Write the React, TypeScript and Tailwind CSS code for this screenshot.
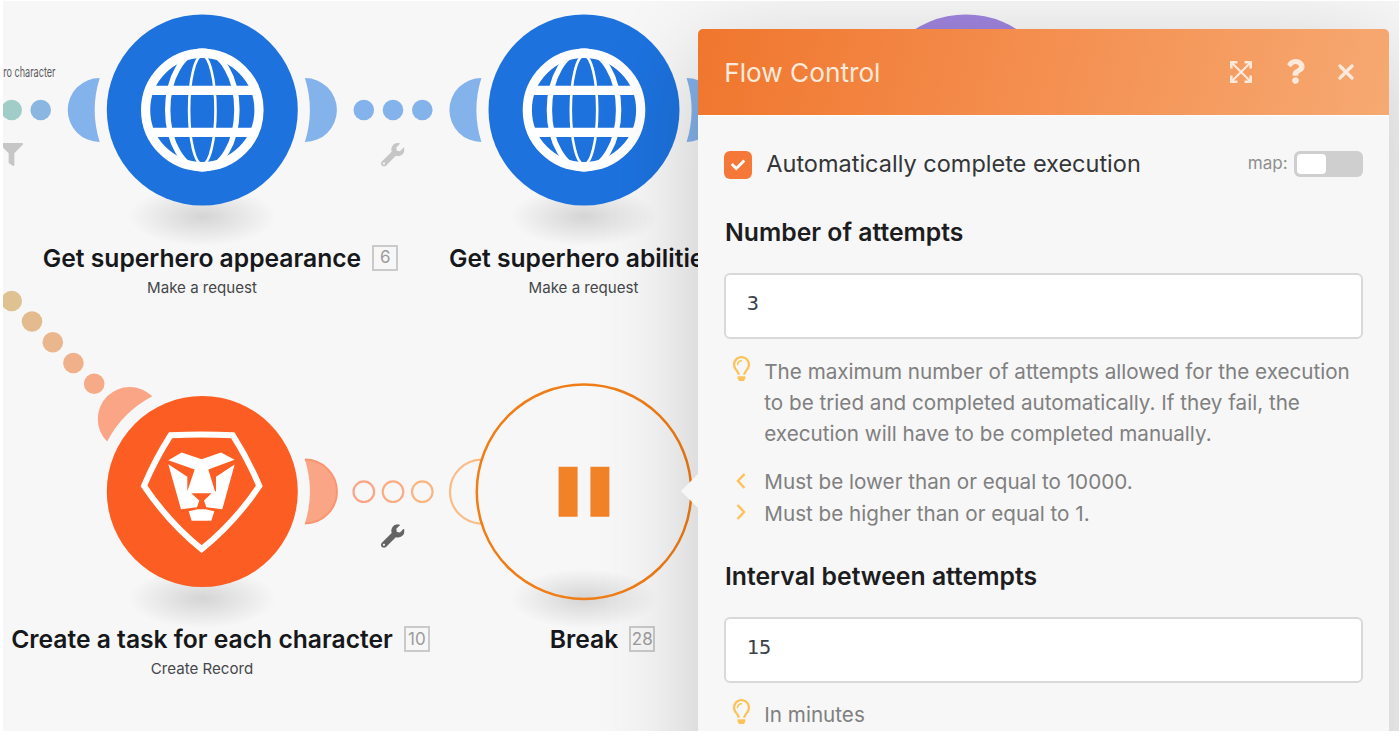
import type { ReactNode } from "react";
import { FaCheck, FaFilter, FaQuestion, FaRegLightbulb, FaWrench } from "react-icons/fa";

const LEFT_TAB = "M-102.6 -32 A32 32 0 0 0 -102.6 32 A107 107 0 0 1 -102.6 -32 Z";
const RIGHT_TAB = "M102.6 -32 A32 32 0 0 1 102.6 32 A107 107 0 0 0 102.6 -32 Z";

const blueDots = [363.8, 393, 422.3];
const routeDots: [number, number, string][] = [
  [11.7, 301, "#dec292"],
  [32, 321.5, "#e4bb8f"],
  [52.8, 342.3, "#e9b68d"],
  [73.4, 363, "#efb08a"],
  [94.2, 383.7, "#f5ab87"],
];
const ringDots: [number, string][] = [
  [363.8, "#fba588"],
  [393, "#f9ad85"],
  [422.3, "#f8b681"],
];

function GroundShadow({ x, y }: { x: number; y: number }) {
  return <ellipse cx={x} cy={y} rx="74" ry="30" fill="url(#ground)" />;
}

function GlobeNode({ x, y }: { x: number; y: number }) {
  return (
    <g transform={`translate(${x} ${y})`}>
      <path d={LEFT_TAB} fill="#84b2ea" />
      <path d={RIGHT_TAB} fill="#84b2ea" />
      <circle r="95.5" fill="#1d72de" />
      <g fill="none" stroke="#fff">
        <circle r="56.7" strokeWidth="9.2" />
        <ellipse rx="13.2" ry="54.5" strokeWidth="2.6" />
        <ellipse rx="34.6" ry="59" strokeWidth="5.4" />
        <path d="M-50 -19.6 H50 M-50 22.4 H50" strokeWidth="9.2" />
      </g>
    </g>
  );
}

function LionNode({ x, y }: { x: number; y: number }) {
  return (
    <g transform={`translate(${x} ${y})`}>
      <path d={LEFT_TAB} fill="#fba587" transform="rotate(45)" />
      <path d={RIGHT_TAB} fill="#fba587" />
      <path d="M102.6 -32 A32 32 0 0 1 102.6 32" fill="none" stroke="#fb9471" strokeWidth="2" />
      <circle r="95.5" fill="#fc5d22" />
      <g transform="translate(-102.3 -101.3) scale(.3333)">
        <path
          d="M212 135 Q305 131 398 135 Q443 205 478 287 Q405 396 305 477 Q205 396 132 287 Q167 205 212 135 Z"
          fill="none"
          stroke="#fff"
          strokeWidth="18"
        />
        <path
          fill="#fff"
          d="M205 210 L245 187 L305 207 L363 187 L404 209 L325 238 L345 303 L348 303 L348 260 L404 223 L367 357 L319 351 L312 331 L335 309 L274 309 L298 331 L291 351 L243 357 L205 222 L262 260 L262 303 L284 238 Z"
        />
        <path fill="#fff" d="M266 363 L293 357 H317 L343 363 L334 392 H275 Z" />
      </g>
    </g>
  );
}

function BreakNode({ x, y }: { x: number; y: number }) {
  return (
    <g transform={`translate(${x} ${y})`}>
      <path d="M-102 -32 A32 32 0 0 0 -102 32" fill="none" stroke="#f8bd88" strokeWidth="2.2" />
      <circle r="107.2" fill="none" stroke="#f07d15" strokeWidth="2.5" />
      <path d="M-25.4 -24.9 h19 v50 h-19 Z M6.4 -24.9 h19 v50 h-19 Z" fill="#f18228" />
    </g>
  );
}

function NodeLabel({ title, badge, subtitle, className }: { title: string; badge?: string; subtitle?: string; className: string }) {
  return (
    <div className={"absolute flex w-[400px] flex-col items-center " + className}>
      <div className="relative text-[24.65px] leading-8 font-semibold whitespace-nowrap text-[#16181b]">
        {title}
        {badge && (
          <span className="absolute top-[3px] left-full ml-[11px] flex h-[26px] w-[26px] items-center justify-center border-2 border-[#cacaca] text-[17px] leading-none font-normal text-[#9c9c9c]">
            {badge}
          </span>
        )}
      </div>
      {subtitle && <div className="mt-[4px] text-[15.1px] leading-5 whitespace-nowrap text-[#45474a]">{subtitle}</div>}
    </div>
  );
}

function Hint({ icon, children }: { icon: ReactNode; children: ReactNode }) {
  return (
    <div className="flex">
      <span className="flex h-[31px] w-[40px] shrink-0 justify-center pr-[6px]">{icon}</span>
      <p className="text-[20.65px] leading-[31.2px] whitespace-nowrap text-[#808080]">{children}</p>
    </div>
  );
}

function Angle({ d }: { d: string }) {
  return (
    <svg width="12" height="18" viewBox="0 0 12 18" className="mt-[5.5px]">
      <path d={d} fill="none" stroke="#fdc35b" strokeWidth="2.5" />
    </svg>
  );
}

function Field({ value }: { value: string }) {
  return (
    <div className="mt-[25.4px] h-[65.6px] rounded-[6px] border-2 border-[#d9d9d9] bg-white px-[20.5px] pt-[12px] font-['DejaVu_Sans_Mono',monospace] text-[20.3px] leading-8 text-[#3a414b]">
      {value}
    </div>
  );
}

const headingClass = "pl-[0.7px] text-[24.75px] leading-8 font-semibold text-[#1d1d1f]";

function FlowControlPanel() {
  return (
    <section className="absolute top-[27.5px] left-[695.3px] h-[800px] w-[690.4px] rounded-[5px] bg-[#f7f7f7] shadow-[0_26px_100px_rgba(0,0,0,0.2)]">
      <svg className="absolute top-[444px] left-[-17px]" width="18" height="36" viewBox="0 0 18 36">
        <path d="M0 18 L18 0 V36 Z" fill="#f7f7f7" />
      </svg>
      <header className="flex h-[86px] items-center rounded-t-[5px] bg-[linear-gradient(105deg,#f0762d_0%,#f48f50_50%,#f6a972_100%)] pr-[34.5px] pl-[26px] text-[#feeadc]">
        <h1 className="grow pt-[3px] text-[26.2px] leading-8">Flow Control</h1>
        <svg width="22" height="22" viewBox="0 0 22 22" fill="none" stroke="currentColor" strokeWidth="2.6">
          <path d="M1.3 7.4 V1.3 H7.4 M14.6 1.3 H20.7 V7.4 M20.7 14.6 V20.7 H14.6 M7.4 20.7 H1.3 V14.6" />
          <path d="M2 2 L20 20 M20 2 L2 20" strokeWidth="2.2" />
        </svg>
        <FaQuestion className="ml-[31.5px] h-[25px] w-[25px]" />
        <svg className="ml-[30px]" width="16" height="16" viewBox="0 0 16 16" fill="none" stroke="currentColor" strokeWidth="3.2" strokeLinecap="round">
          <path d="M2 2 L14 14 M14 2 L2 14" />
        </svg>
      </header>
      <div className="border-t border-white px-[26px] pt-[35.5px]">
        <div className="flex h-7 items-center">
          <span className="flex h-7 w-7 items-center justify-center rounded-[6px] bg-[#f67838] text-white">
            <FaCheck className="h-[14px] w-[14px]" />
          </span>
          <span className="ml-[14px] grow pb-[3px] text-[23.5px] leading-none text-[#343638]">Automatically complete execution</span>
          <span className="mr-[6px] pb-[4px] text-[17.1px] leading-none text-[#8f8f8f]">map:</span>
          <span className="mb-[3px] flex h-[26px] w-[69px] rounded-[6px] bg-[#cfcfcf] p-[3px]">
            <span className="h-[20px] w-[29px] rounded-[4px] bg-white" />
          </span>
        </div>

        <h2 className={headingClass + " mt-[37px]"}>Number of attempts</h2>
        <Field value="3" />
        <div className="mt-[17px]">
          <Hint icon={<FaRegLightbulb className="h-[25px] w-[25px] text-[#fdc35b]" />}>
            The maximum number of attempts allowed for the execution
            <br />
            to be tried and completed automatically. If they fail, the
            <br />
            execution will have to be completed manually.
          </Hint>
        </div>
        <div className="mt-[16.8px]">
          <Hint icon={<Angle d="M9.5 2 L3 9 L9.5 16" />}>Must be lower than or equal to 10000.</Hint>
          <Hint icon={<Angle d="M2.5 2 L9 9 L2.5 16" />}>Must be higher than or equal to 1.</Hint>
        </div>

        <h2 className={headingClass + " mt-[30.8px]"}>Interval between attempts</h2>
        <Field value="15" />
        <div className="mt-[16.8px]">
          <Hint icon={<FaRegLightbulb className="h-[25px] w-[25px] text-[#fdc35b]" />}>In minutes</Hint>
        </div>
      </div>
    </section>
  );
}

export default function App() {
  return (
    <div className="h-[736px] w-[1400px] overflow-hidden bg-white pt-px pl-[3px] font-['Inter',sans-serif]">
      <main className="relative h-[730px] w-[1396px] overflow-hidden bg-[#f7f7f7]">
        <svg className="block" width="1396" height="730" viewBox="3 1 1396 730">
          <defs>
            <radialGradient id="ground">
              <stop offset="0" stopColor="#000" stopOpacity=".14" />
              <stop offset="1" stopColor="#000" stopOpacity="0" />
            </radialGradient>
          </defs>
          <GroundShadow x={202.3} y={216.5} />
          <GroundShadow x={584} y={216.5} />
          <GroundShadow x={202.3} y={598.5} />
          <GroundShadow x={584} y={598.5} />
          <circle cx="11.7" cy="110" r="10.3" fill="#a1cdc8" />
          <circle cx="40.7" cy="110" r="10.3" fill="#8ab6e2" />
          {blueDots.map((x) => (
            <circle key={x} cx={x} cy="110" r="10.3" fill="#84b2ea" />
          ))}
          {routeDots.map(([x, y, fill]) => (
            <circle key={x} cx={x} cy={y} r="10.3" fill={fill} />
          ))}
          {ringDots.map(([x, stroke]) => (
            <circle key={x} cx={x} cy="491.7" r="10.3" fill="none" stroke={stroke} strokeWidth="2.2" />
          ))}
          <circle cx="966" cy="110" r="95.5" fill="#9f84de" />
          <GlobeNode x={202.3} y={110} />
          <GlobeNode x={584} y={110} />
          <LionNode x={202.3} y={491.5} />
          <BreakNode x={584} y={491.7} />
          <FaFilter x="0" y="143" size={23} color="#c6c6c6" />
          <FaWrench x="381" y="143" size={23.5} color="#c6c6c6" />
          <FaWrench x="381" y="524.3" size={23.5} color="#646464" />
        </svg>

        <div className="absolute top-[62px] right-[1343.5px] origin-right scale-x-[.65] text-[14px] leading-[18px] whitespace-nowrap text-[#5c5c5c]">
          ro character
        </div>
        <NodeLabel className="top-[240.7px] left-[-1px]" title="Get superhero appearance" badge="6" subtitle="Make a request" />
        <NodeLabel className="top-[240.7px] left-[380.5px]" title="Get superhero abilities" subtitle="Make a request" />
        <NodeLabel className="top-[622px] left-[-1px]" title="Create a task for each character" badge="10" subtitle="Create Record" />
        <NodeLabel className="top-[622px] left-[381px]" title="Break" badge="28" />
        <FlowControlPanel />
      </main>
    </div>
  );
}
